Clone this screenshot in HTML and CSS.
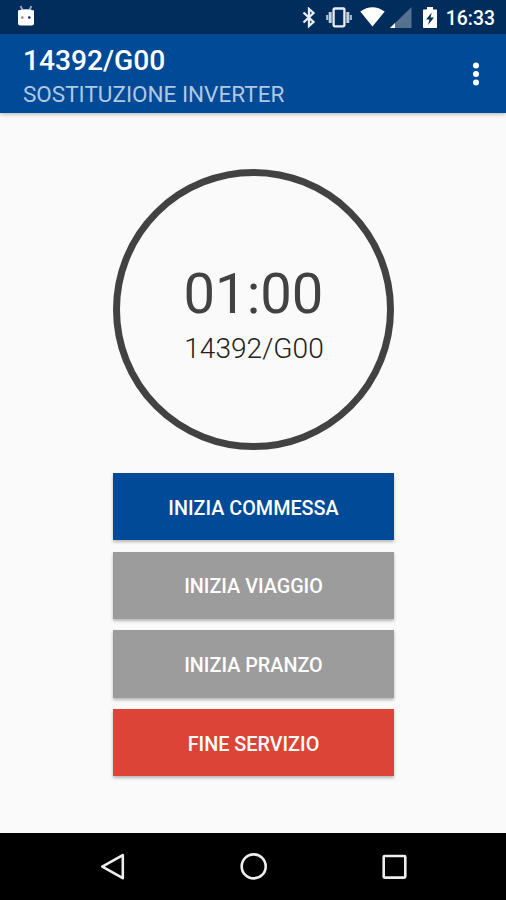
FILE: index.html
```
<!DOCTYPE html>
<html lang="it">
<head>
    <meta charset="UTF-8">
    <meta name="viewport" content="width=device-width, initial-scale=1.0">
    <title>14392/G00</title>
    <link rel="stylesheet" href="styles.css">
</head>
<body>
    <div class="status-bar">
        <svg class="droid" width="18" height="22" viewBox="0 0 18 22">
            <path d="M3.5 1l2 4M14.5 1l-2 4" stroke="#9aa9bf" stroke-width="1.8"/>
            <path d="M1 5.5q8-2.5 16 0V18q0 2.500-2.500 2.500h-11Q1 20.500 1 18z" fill="#fff"/>
            <circle cx="5.300" cy="12.500" r="1.200" fill="#7e858d"/>
            <circle cx="12.300" cy="12.500" r="1.300" fill="#0b2258"/>
        </svg>
        <div class="status-icons">
            <svg class="bluetooth" width="14" height="22" viewBox="0 0 14 22">
                <path d="M1.500 5.500l10 9.500L7 19v-17l4.500 4L1.500 15.500" fill="none" stroke="#e8edf5" stroke-width="2.300"/>
            </svg>
            <svg class="vibrate" width="26" height="22" viewBox="0 0 26 22">
                <rect x="7.600" y="1.500" width="10.800" height="17.800" rx="1" fill="none" stroke="#e8edf5" stroke-width="2.300"/>
                <path d="M4.200 5v11M21.800 5v11" stroke="#c3cede" stroke-width="3"/>
                <path d="M1.200 8v5M24.800 8v5" stroke="#aebbd0" stroke-width="2.200"/>
            </svg>
            <svg class="wifi" width="25" height="20" viewBox="0 0 25 20">
                <path d="M.300 4.600Q12.500-4 24.700 4.600L12.500 19.600z" fill="#fff"/>
            </svg>
            <svg class="signal" width="22" height="22" viewBox="0 0 22 22">
                <path d="M0 21L21.500 0v21z" fill="#54718f"/>
                <path d="M0 21l5-5v5z" fill="#fff"/>
            </svg>
            <svg class="battery" width="14" height="22" viewBox="0 0 14 22">
                <path d="M4 0h6v2.500h3.200q.800 0 .800.800V20.200q0 .800-.800.800H.800q-.800 0-.800-.800V3.300q0-.800.800-.800H4z" fill="#fff"/>
                <path d="M8.800 5.500L3 12.500h3.500L5 18l6-7.500H7.500z" fill="#002d5c"/>
            </svg>
            <span class="clock">16:33</span>
        </div>
    </div>

    <header class="app-bar">
        <div class="titles">
            <h1>14392/G00</h1>
            <p>SOSTITUZIONE INVERTER</p>
        </div>
        <button class="more" aria-label="Menu">
            <svg width="8" height="24" viewBox="0 0 8 24">
                <circle cx="4" cy="3.500" r="3" fill="#fff"/>
                <circle cx="4" cy="12" r="3" fill="#fff"/>
                <circle cx="4" cy="20.500" r="3" fill="#fff"/>
            </svg>
        </button>
    </header>

    <main>
        <div class="timer">
            <span class="time">01:00</span>
            <span class="job">14392/G00</span>
        </div>
        <div class="actions">
            <button class="action primary">INIZIA COMMESSA</button>
            <button class="action">INIZIA VIAGGIO</button>
            <button class="action">INIZIA PRANZO</button>
            <button class="action danger">FINE SERVIZIO</button>
        </div>
    </main>

    <nav class="nav-bar">
        <svg width="28" height="28" viewBox="0 0 28 28">
            <path d="M3.300 13.700L23.800 2.200v23z"/>
        </svg>
        <svg width="28" height="28" viewBox="0 0 28 28">
            <circle cx="13.700" cy="13.400" r="12"/>
        </svg>
        <svg width="28" height="28" viewBox="0 0 28 28">
            <rect x="3.700" y="3" width="21.600" height="21.600" rx="1"/>
        </svg>
    </nav>
</body>
</html>
```
FILE: styles.css
```
* {
    box-sizing: border-box;
}
body {
    display: flex;
    flex-direction: column;
    height: 900px;
    margin: 0;
    font-family: Roboto, sans-serif;
    background-color: #fafafa;
    overflow: hidden;
}
button {
    border: none;
    padding: 0;
    font-family: inherit;
    cursor: pointer;
}
svg {
    display: block;
}
.status-bar {
    display: flex;
    justify-content: space-between;
    flex: none;
    height: 34px;
    padding: 0 11px 0 17px;
    background-color: #002d5c;
}
.droid {
    margin-top: 5px;
}
.status-icons {
    display: flex;
    align-items: flex-start;
    padding-top: 7px;
}
.vibrate {
    margin-left: 10px;
}
.wifi {
    margin-left: 8px;
}
.signal {
    margin-left: 5px;
}
.battery {
    margin-left: 11px;
}
.clock {
    margin-left: 9px;
    color: white;
    font-size: 19.4px;
    font-weight: 500;
    line-height: 23px;
}
.app-bar {
    display: flex;
    justify-content: space-between;
    flex: none;
    height: 79px;
    padding: 10px 26px 0 23px;
    background-color: #004a98;
    box-shadow: 0 1px 4px rgba(0,0,0,0.3);
}
.titles h1 {
    margin: 0;
    color: white;
    font-size: 28.2px;
    font-weight: 500;
    line-height: 34px;
}
.titles p {
    margin: 2px 0 0;
    color: #b2c8e0;
    font-size: 22.5px;
    line-height: 28px;
}
.more {
    align-self: flex-start;
    margin-top: 17.5px;
    background: none;
}
main {
    display: flex;
    flex-direction: column;
    align-items: center;
    flex: 1;
    padding-top: 56px;
    padding-left: 1px;
}
.timer {
    display: flex;
    flex-direction: column;
    align-items: center;
    width: 281px;
    height: 281px;
    padding-top: 85px;
    border: 7px solid #424242;
    border-radius: 50%;
    color: #424242;
}
.time {
    font-size: 56.2px;
    line-height: 66px;
}
.job {
    margin-top: 5px;
    padding-left: 1px;
    color: #212121;
    font-size: 28.1px;
    font-weight: 300;
    line-height: 33px;
}
.actions {
    display: flex;
    flex-direction: column;
    gap: 11.4px;
    width: 281px;
    margin-top: 23px;
}
.action {
    height: 67.3px;
    padding-top: 3px;
    background-color: #9c9c9c;
    box-shadow: 0 2px 3px rgba(0,0,0,0.28);
    color: white;
    font-size: 19.8px;
    font-weight: 500;
}
.primary {
    background-color: #004a98;
}
.danger {
    background-color: #db4437;
}
.nav-bar {
    display: flex;
    justify-content: space-between;
    flex: none;
    height: 67px;
    padding: 20px 98px 0 99px;
    background-color: black;
}
.nav-bar svg {
    fill: none;
    stroke: #eee;
    stroke-width: 2.6;
    stroke-linejoin: round;
}
```
